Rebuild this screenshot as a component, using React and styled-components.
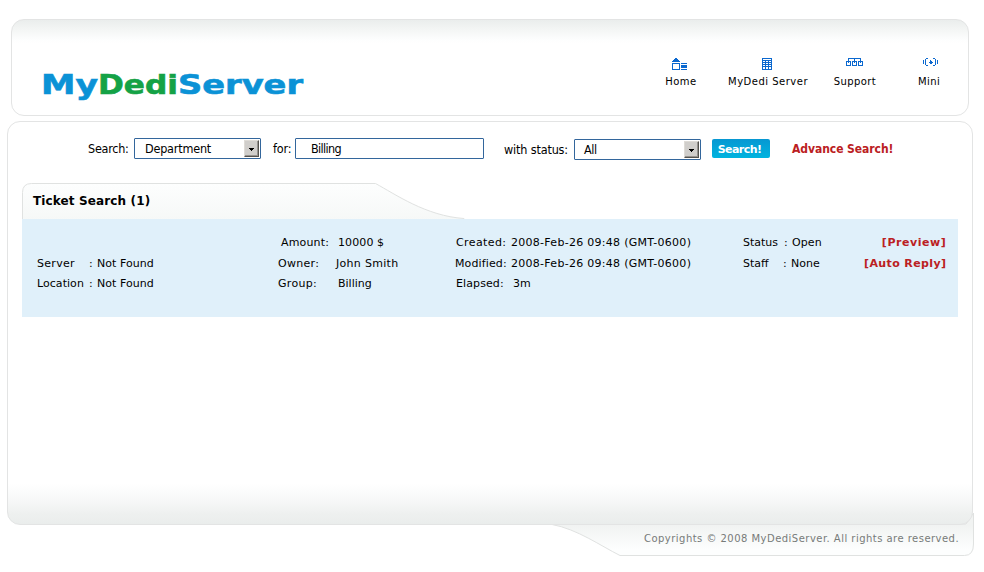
import React from 'react';
import styled, { createGlobalStyle } from 'styled-components';

const GlobalStyle = createGlobalStyle`
  * { box-sizing: border-box; }
  body {
    margin: 0;
    background: #fff;
    color: #000;
    font-family: "DejaVu Sans", Verdana, sans-serif;
    font-size: 11px;
  }
`;

const Page = styled.div`
  width: 984px;
  height: 572px;
  padding: 19px 10px 0 7px;
  overflow: hidden;
`;

const Header = styled.header`
  width: 958px;
  height: 97px;
  margin: 0 0 5px 4px;
  padding: 0 0 0 30px;
  display: flex;
  justify-content: space-between;
  border: 1px solid #e3e4e4;
  border-radius: 13px;
  background: linear-gradient(#eaedec 0, #f3f5f4 9px, #fdfefe 20px, #fff 24px);
`;

const Logo = styled.svg`
  display: block;
  width: 264px;
  height: 40px;
  margin-top: 46px;
  font-family: "DejaVu Sans", sans-serif;
  font-weight: 700;
  font-size: 26.5px;
  stroke-width: 0.6px;
`;

const Nav = styled.nav`
  display: grid;
  grid-template-columns: 82px 92px 82px 66px;
  justify-content: start;
  padding-top: 38px;
  width: 328px;
`;

const NavItem = styled.a`
  display: flex;
  flex-direction: column;
  align-items: center;
  font-size: 10px;
  line-height: 14px;
  white-space: nowrap;
  letter-spacing: ${(p) => p.$track}px;
  svg { display: block; margin-bottom: 4px; transform: translateX(${(p) => p.$nudge || 0}px); }
`;

const Panel = styled.main`
  position: relative;
  z-index: 1;
  width: 966px;
  height: 404px;
  padding: 16px 14px 0;
  border: 1px solid #e3e4e4;
  border-radius: 13px;
  background: linear-gradient(to top, #eaedec 0, #eef0ef 10px, #f7f8f8 24px, #fff 40px);
`;

const SearchBar = styled.form`
  display: flex;
  align-items: flex-start;
  height: 45px;
  padding-left: 66px;
  font-family: "DejaVu Sans Condensed", "DejaVu Sans", Tahoma, sans-serif;
  font-stretch: condensed;
  font-size: 12.5px;
  line-height: 21px;
`;

const FieldLabel = styled.label`
  flex: none;
  width: ${(p) => p.$width}px;
  margin-top: ${(p) => p.$drop || 0}px;
  white-space: nowrap;
  letter-spacing: ${(p) => p.$track || 0}px;
`;

const Field = styled.div`
  flex: none;
  display: flex;
  justify-content: space-between;
  width: ${(p) => p.$width}px;
  height: 21px;
  margin: ${(p) => p.$drop || 0}px ${(p) => p.$gap}px 0 0;
  padding: 0 1px 0 ${(p) => p.$inset}px;
  border: 1px solid #33669c;
  border-radius: 1px;
  background: #fff;
  line-height: 20px;
  letter-spacing: ${(p) => p.$track || 0}px;
`;

const Arrow = styled.span`
  display: flex;
  align-items: center;
  justify-content: center;
  width: 15px;
  height: 17px;
  margin-top: 1px;
  border: 1px solid;
  border-color: #dedbd6 #55534f #55534f #dedbd6;
  background: #d0cecb;
  box-shadow: inset -1px -1px #96938f;
  svg { display: block; margin-top: 2px; }
`;

const SearchButton = styled.button`
  width: 58px;
  height: 19px;
  margin: 1px 22px 0 0;
  padding: 1px 3px 0 0;
  border: 0;
  border-radius: 2px;
  background: linear-gradient(#0797d2, #00b4df);
  color: #fff;
  font: 700 11px/19px "DejaVu Sans", Verdana, sans-serif;
  letter-spacing: -0.55px;
`;

const AdvancedLink = styled.a`
  margin-top: 1px;
  color: #bb2022;
  font-weight: 700;
  font-size: 12px;
  letter-spacing: -0.06px;
  white-space: nowrap;
`;

const Tab = styled.div`
  position: relative;
  width: 446px;
  height: 36px;
  padding: 10px 0 0 11px;
  svg { position: absolute; left: 0; top: 0; }
`;

const TabTitle = styled.h1`
  position: relative;
  margin: 0;
  font-size: 12px;
  line-height: 17px;
  letter-spacing: 0.13px;
`;

const Ticket = styled.section`
  display: grid;
  grid-template-columns: 241px 178px 287px 121px 94px;
  height: 98px;
  padding: 14px 0 0 15px;
  background: #e0f0fa;
`;

const Details = styled.div`
  display: grid;
  grid-template-rows: 21px 20px 20px;
  align-content: start;
`;

const Line = styled.div`
  display: flex;
  height: 20px;
  line-height: 20px;
  white-space: nowrap;
`;

const Term = styled.span`
  flex: none;
  width: ${(p) => p.$width}px;
  margin-left: ${(p) => p.$indent || 0}px;
  letter-spacing: ${(p) => p.$track || 0}px;
`;

const Value = styled.span`
  letter-spacing: ${(p) => p.$track || 0}px;
`;

const Actions = styled(Details)`
  justify-items: end;
  padding-right: 12px;
`;

const Action = styled.a`
  color: #bb2022;
  font-weight: 700;
  line-height: 20px;
  white-space: nowrap;
  letter-spacing: ${(p) => p.$track}px;
`;

const Footer = styled.footer`
  position: relative;
  width: 423px;
  height: 48px;
  margin: -17px 0 0 545px;
  padding: 23px 0 0 92px;
  color: #777b79;
  font-size: 10px;
  line-height: 15px;
  white-space: nowrap;
  letter-spacing: 0.47px;
  svg { position: absolute; left: 0; top: 0; }
  span { position: relative; }
`;

const HomeIcon = () => (
  <svg width="16" height="13" fill="#0b68cf" shapeRendering="crispEdges">
    <path d="M3 0h2v1h1v1h1v1h1v1H0V3h1V2h1V1h1zM0 5h8v7H0zM1 6v5h6V6zM9 5h6v1H9zM9 7h6v3H9zM9 11h6v1H9z" fillRule="evenodd" />
  </svg>
);

const ServerIcon = () => (
  <svg width="10" height="13" fill="#0b68cf" shapeRendering="crispEdges">
    <path fillRule="evenodd" d="M0 0h10v12H0zM1 1v10h8V1z" />
    <path d="M1 2h8v1H1zM1 4h8v1H1zM1 6h8v1H1zM1 8h8v1H1zM3 2h1v9H3zM6 2h1v9H6z" />
  </svg>
);

const SupportIcon = () => (
  <svg width="17" height="13" fill="none" stroke="#0b68cf" shapeRendering="crispEdges">
    <path d="M.5 3.5h4v4h-4zM6.5 3.5h4v4h-4zM12.500 3.500h4v4h-4zM2.500 5V.5h12V5M8.500 0v5" />
  </svg>
);

const MiniIcon = () => (
  <svg width="15" height="13" fill="#0b68cf" shapeRendering="crispEdges">
    <path d="M0 2h1v4H0zM14 2h1v4h-1zM3 0h2v1H3zM2 1h1v6H2zM3 7h2v1H3zM10 0h2v1h-2zM12 1h1v6h-1zM10 7h2v1h-2zM7 2h1v1h1v1h1v1H9v1H7V5H6V4h1z" />
  </svg>
);

const DropArrow = () => (
  <Arrow>
    <svg width="5" height="3" shapeRendering="crispEdges"><path d="M0 0h5v1H4v1H3v1H2V2H1V1H0z" /></svg>
  </Arrow>
);

export default function App() {
  return (
    <>
      <GlobalStyle />
      <Page>
        <Header>
          <Logo>
            <text x="-1" y="28.300" fill="#0b92d6" stroke="#0b92d6" textLength="57" lengthAdjust="spacingAndGlyphs">My</text>
            <text x="56" y="28.300" fill="#14a246" stroke="#14a246" textLength="80" lengthAdjust="spacingAndGlyphs">Dedi</text>
            <text x="136" y="28.300" fill="#0b92d6" stroke="#0b92d6" textLength="125" lengthAdjust="spacingAndGlyphs">Server</text>
          </Logo>
          <Nav>
            <NavItem $track={0.45} $nudge={-1}><HomeIcon />Home</NavItem>
            <NavItem $track={0.5} $nudge={-1}><ServerIcon />MyDedi Server</NavItem>
            <NavItem $track={0.4} $nudge={-1}><SupportIcon />Support</NavItem>
            <NavItem $track={0.4} $nudge={1}><MiniIcon />Mini</NavItem>
          </Nav>
        </Header>

        <Panel>
          <SearchBar>
            <FieldLabel $width={46} $track={-0.25}>Search:</FieldLabel>
            <Field $width={127} $gap={12} $inset={10} $track={-0.2}>Department<DropArrow /></Field>
            <FieldLabel $width={22} $track={-0.2}>for:</FieldLabel>
            <Field $width={189} $gap={20} $inset={15} $track={-0.65}>Billing</Field>
            <FieldLabel $width={70} $drop={1} $track={-0.15}>with status:</FieldLabel>
            <Field $width={127} $gap={11} $inset={9} $drop={1} $track={-0.4}>All<DropArrow /></Field>
            <SearchButton type="button">Search!</SearchButton>
            <AdvancedLink>Advance Search!</AdvancedLink>
          </SearchBar>

          <Tab>
            <svg width="446" height="36">
              <defs>
                <linearGradient id="tabFill" x1="0" y1="0" x2="0" y2="1">
                  <stop offset="0" stopColor="#fdfefe" />
                  <stop offset="1" stopColor="#f6f8f7" />
                </linearGradient>
              </defs>
              <path d="M.5 37V9.500Q.5.500 9.500.500H353.500C373 11 404 33 442 35.500V37z" fill="url(#tabFill)" stroke="#e0e2e1" />
            </svg>
            <TabTitle>Ticket Search (1)</TabTitle>
          </Tab>

          <Ticket>
            <Details>
              <Line />
              <Line><Term $width={52} $track={0.3}>Server</Term><Term $width={8}>:</Term><Value $track={0.05}>Not Found</Value></Line>
              <Line><Term $width={52} $track={0.05}>Location</Term><Term $width={8}>:</Term><Value $track={0.05}>Not Found</Value></Line>
            </Details>
            <Details>
              <Line><Term $indent={3} $width={57} $track={0.15}>Amount:</Term><Value $track={0.1}>10000 $</Value></Line>
              <Line><Term $width={58} $track={0.3}>Owner:</Term><Value $track={0.3}>John Smith</Value></Line>
              <Line><Term $width={60} $track={0.3}>Group:</Term><Value>Billing</Value></Line>
            </Details>
            <Details>
              <Line><Term $width={55} $track={0.4}>Created:</Term><Value $track={0.28}>2008-Feb-26 09:48 (GMT-0600)</Value></Line>
              <Line><Term $indent={-1} $width={56} $track={0.12}>Modified:</Term><Value $track={0.28}>2008-Feb-26 09:48 (GMT-0600)</Value></Line>
              <Line><Term $width={57} $track={0.1}>Elapsed:</Term><Value>3m</Value></Line>
            </Details>
            <Details>
              <Line><Term $width={41}>Status</Term><Term $width={8}>:</Term><Value $track={0.1}>Open</Value></Line>
              <Line><Term $width={40}>Staff</Term><Term $width={8}>:</Term><Value>None</Value></Line>
            </Details>
            <Actions>
              <Action $track={0.55}>[Preview]</Action>
              <Action $track={0.38}>[Auto Reply]</Action>
            </Actions>
          </Ticket>
        </Panel>

        <Footer>
          <svg width="423" height="50">
            <defs>
              <linearGradient id="footFill" x1="0" y1="0" x2="0" y2="1">
                <stop offset=".3" stopColor="#f1f3f2" />
                <stop offset=".85" stopColor="#fdfefe" />
              </linearGradient>
            </defs>
            <path d="M0 16.500C25 21 49 38 68 47.500H412.500Q421.500 47.500 421.500 36V5L414 16z" fill="url(#footFill)" stroke="#e0e2e1" />
          </svg>
          <span>Copyrights © 2008 MyDediServer. All rights are reserved.</span>
        </Footer>
      </Page>
    </>
  );
}
